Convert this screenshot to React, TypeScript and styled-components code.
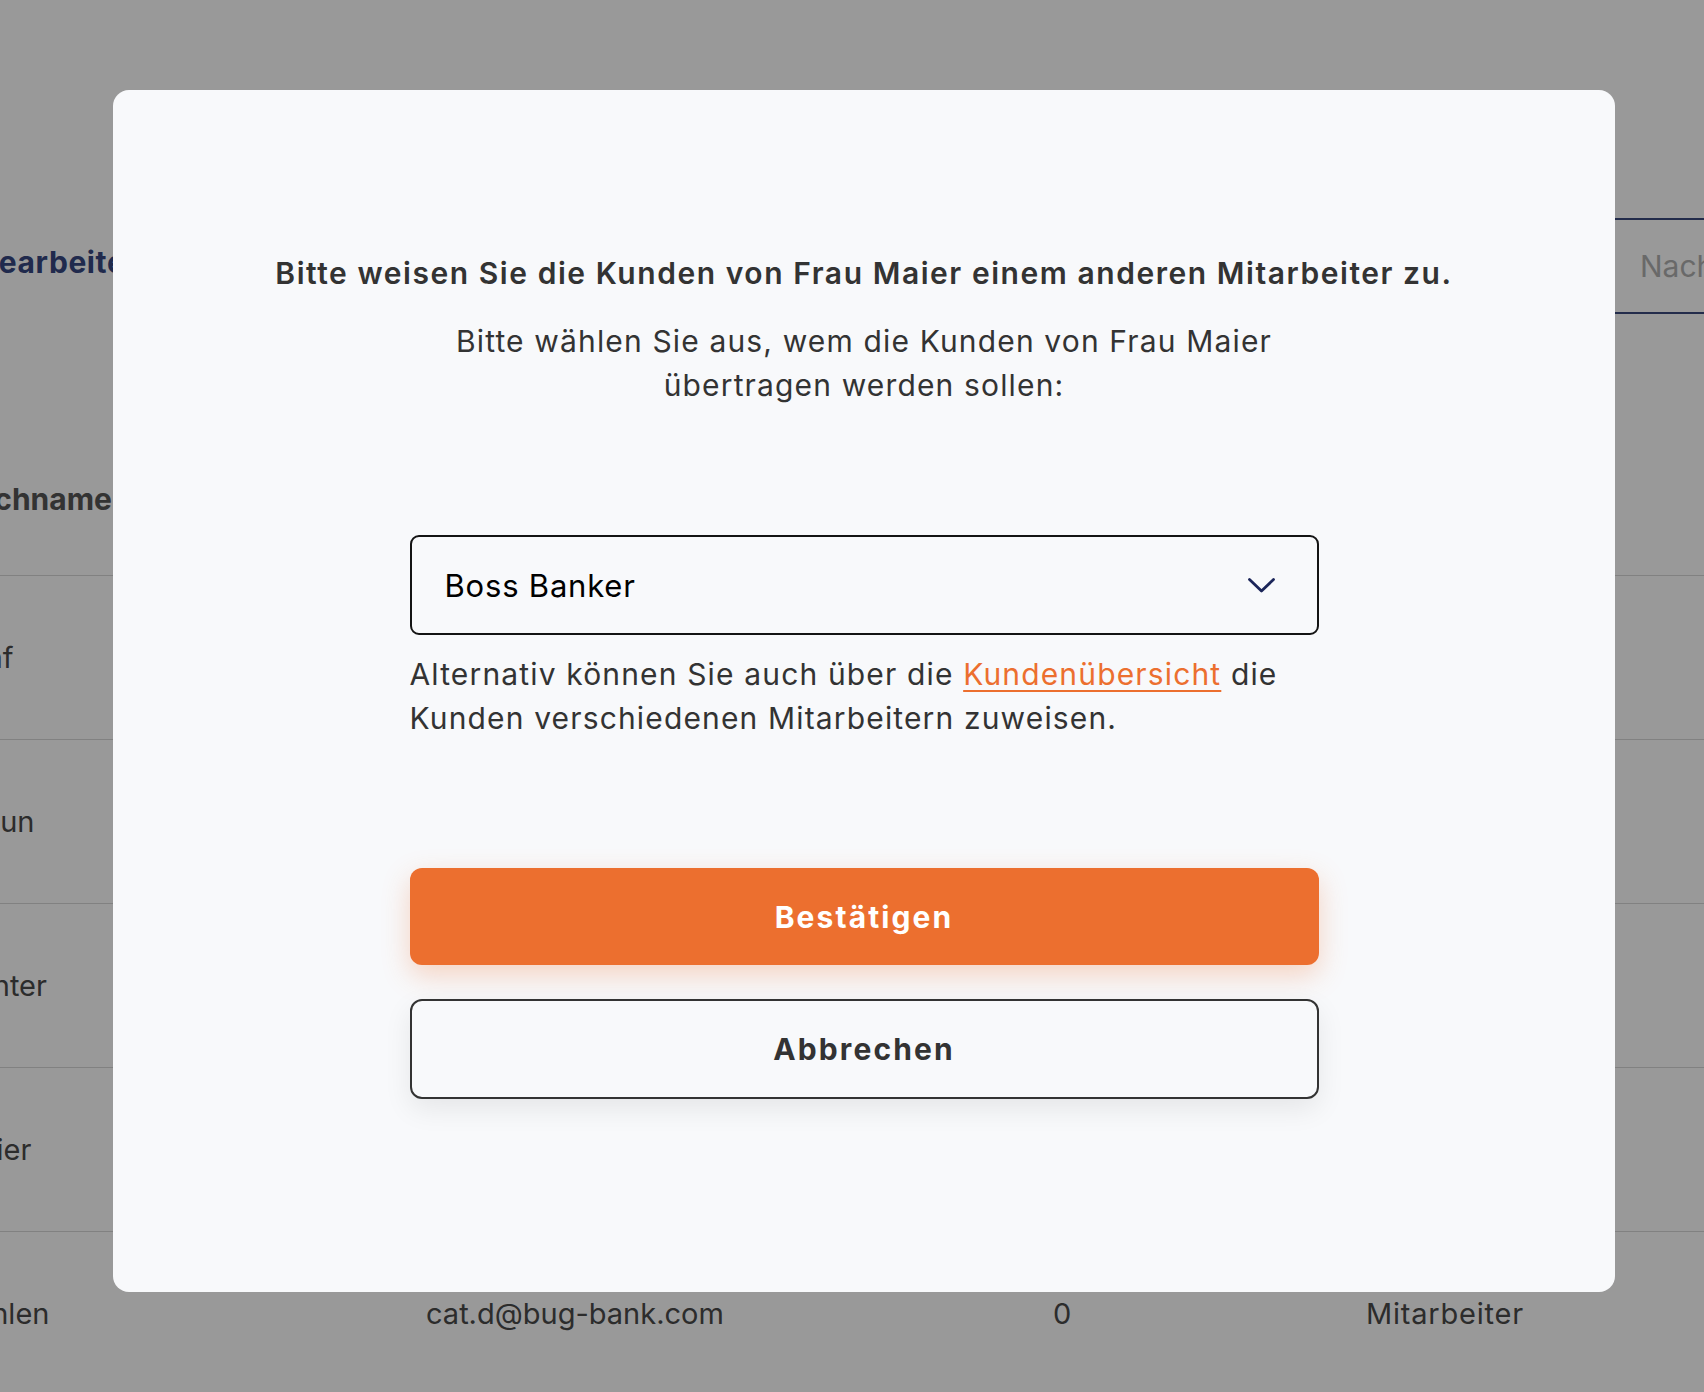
import * as React from "react"
import styled, { createGlobalStyle } from 'styled-components'

const GlobalStyle = createGlobalStyle`
  html, body {
    margin: 0;
    padding: 0;
    height: 100%;
    overflow: hidden;
    font-family: Inter, "Noto Sans", sans-serif;
    background: #ffffff;
  }
`

// page behind the dialog
const Page = styled('div')`
  width: 1704px;
  height: 1392px;
  overflow: hidden;
  background: #ffffff;
`

const PageHeader = styled('div')`
  padding-top: 218px;
  display: flex;
  align-items: center;
  justify-content: space-between;
`

const HeaderTitle = styled('h1')`
  margin: 0 0 8px -198px;
  font-size: 30px;
  line-height: 36px;
  font-weight: 700;
  letter-spacing: 0.6px;
  color: #364780;
  white-space: nowrap;
`

const SearchInput = styled('div')`
  width: 400px;
  height: 96px;
  margin-right: -300px;
  box-sizing: border-box;
  border: 2px solid #3b4a7d;
  border-radius: 6px;
  display: flex;
  align-items: center;
  padding-left: 34px;
  font-size: 30px;
  color: #b0b0b0;
`

const Table = styled('div')`
  margin-left: -46px;
`

const HeaderRow = styled('div')`
  height: 262px;
  box-sizing: border-box;
  padding-bottom: 58px;
  display: grid;
  grid-template-columns: 472px 627px 313px 1fr;
  align-items: end;
  border-bottom: 1.5px solid #d8d8d8;
  font-size: 30px;
  line-height: 36px;
  font-weight: 700;
  color: #555;
`

const Row = styled('div')`
  height: 164px;
  box-sizing: border-box;
  display: grid;
  grid-template-columns: 472px 627px 313px 1fr;
  align-items: center;
  border-bottom: 1.5px solid #d8d8d8;
  font-size: 29px;
  color: #4a4a4a;
`

const Cell = styled('div')`
  white-space: nowrap;
`

const RoleCell = styled(Cell)`
  letter-spacing: 0.8px;
`

const Overlay = styled('div')`
  position: fixed;
  inset: 0;
  background: rgba(0, 0, 0, 0.4);
  display: flex;
  align-items: flex-start;
  padding: 90px 89px 0 113px;
`

const Modal = styled('div')`
  flex: 1;
  height: 1202px;
  box-sizing: border-box;
  background: #f8f9fb;
  border-radius: 16px;
  padding-top: 163px;
  display: flex;
  flex-direction: column;
  align-items: center;
  color: #333333;
  letter-spacing: 1.15px;
`

const Title = styled('h2')`
  margin: 0;
  font-size: 30px;
  line-height: 40px;
  font-weight: 600;
  letter-spacing: 1.55px;
  text-align: center;
`

const Column = styled('div')`
  width: 909px;
  display: flex;
  flex-direction: column;
`

const Subtitle = styled('p')`
  margin: 26px 0 0;
  font-size: 30px;
  line-height: 44px;
  text-align: center;
`

const Select = styled('div')`
  margin-top: 128px;
  height: 100px;
  box-sizing: border-box;
  border: 2px solid #141414;
  border-radius: 9px;
  padding: 0 42px 0 33px;
  display: flex;
  align-items: center;
  justify-content: space-between;
  font-size: 31px;
  letter-spacing: 0.8px;
  color: #000;
`

const Helper = styled('p')`
  margin: 18px 0 0;
  font-size: 30px;
  line-height: 43.5px;
`

const Link = styled('a')`
  color: #ec6f2f;
  text-decoration: underline;
  text-underline-offset: 5px;
  text-decoration-thickness: 2px;
`

const Button = styled('button')<{ $primary?: boolean }>`
  height: ${p => (p.$primary ? '97px' : '100px')};
  box-sizing: border-box;
  border-radius: 12px;
  font-family: Inter, sans-serif;
  font-size: 30px;
  font-weight: 700;
  letter-spacing: 2.1px;
  cursor: pointer;
  border: ${p => (p.$primary ? 'none' : '2px solid #333')};
  background: ${p => (p.$primary ? '#ec6f2f' : '#f8f9fb')};
  color: ${p => (p.$primary ? '#fff' : '#333')};
  box-shadow: ${p => (p.$primary ? '0 10px 28px rgba(236, 111, 47, 0.28)' : '0 10px 28px rgba(0, 0, 0, 0.08)')};
  margin-top: ${p => (p.$primary ? '128px' : '34px')};
`

const rows = [
  { name: 'Graf', mail: '', count: '', role: '' },
  { name: 'Braun', mail: '', count: '', role: '' },
  { name: 'Günter', mail: '', count: '', role: '' },
  { name: 'Maier', mail: '', count: '', role: '' },
  { name: 'Dahlen', mail: 'cat.d@bug-bank.com', count: '0', role: 'Mitarbeiter' },
]

const App: React.FC = () => {
  return (
    <>
      <GlobalStyle />
      <Page>
        <PageHeader>
          <HeaderTitle>Mitarbeiter bearbeiten</HeaderTitle>
          <SearchInput>Nachname</SearchInput>
        </PageHeader>
        <Table>
          <HeaderRow>
            <Cell>Nachname</Cell>
            <Cell>E-Mail</Cell>
            <Cell>Kunden</Cell>
            <Cell>Rolle</Cell>
          </HeaderRow>
          {rows.map(r => (
            <Row key={r.name}>
              <Cell>{r.name}</Cell>
              <Cell>{r.mail}</Cell>
              <Cell>{r.count}</Cell>
              <RoleCell>{r.role}</RoleCell>
            </Row>
          ))}
        </Table>
      </Page>
      <Overlay>
        <Modal>
          <Title>Bitte weisen Sie die Kunden von Frau Maier einem anderen Mitarbeiter zu.</Title>
          <Column>
            <Subtitle>Bitte wählen Sie aus, wem die Kunden von Frau Maier übertragen werden sollen:</Subtitle>
            <Select>
              <span>Boss Banker</span>
              <svg width="27" height="15" viewBox="0 0 27 15" fill="none">
                <path d="M1.5 1.5 L13.5 13 L25.5 1.5" stroke="#1b2559" strokeWidth="2.8" strokeLinecap="round" strokeLinejoin="round" />
              </svg>
            </Select>
            <Helper>
              Alternativ können Sie auch über die <Link href="#">Kundenübersicht</Link> die Kunden verschiedenen Mitarbeitern zuweisen.
            </Helper>
            <Button $primary>Bestätigen</Button>
            <Button>Abbrechen</Button>
          </Column>
        </Modal>
      </Overlay>
    </>
  )
}

export default App
